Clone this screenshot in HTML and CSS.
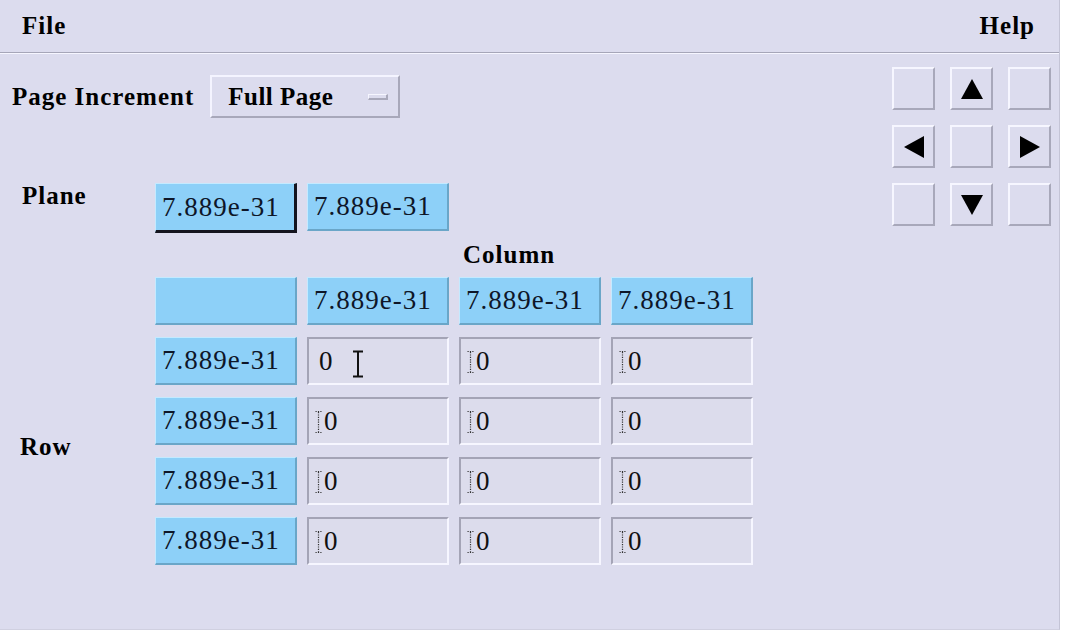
FILE: index.html
```html
<!DOCTYPE html>
<html>
<head>
<meta charset="utf-8">
<link rel="stylesheet" href="styles.css">
</head>
<body>
<div class="window">
  <div class="menubar">
    <span class="menu">File</span>
    <span class="menu">Help</span>
  </div>
  <div class="content">
    <div class="main">
      <div class="pager">
        <span class="label">Page Increment</span>
        <div class="option">Full Page<span class="indicator"></span></div>
      </div>
      <div class="plane">
        <span class="label plane-label">Plane</span>
        <div class="btn blue selected">7.889e-31</div>
        <div class="btn blue">7.889e-31</div>
      </div>
      <div class="label col-label">Column</div>
      <div class="table">
        <div class="label row-label">Row</div>
        <div class="btn blue"></div>
        <div class="btn blue">7.889e-31</div>
        <div class="btn blue">7.889e-31</div>
        <div class="btn blue">7.889e-31</div>

        <div class="btn blue">7.889e-31</div>
        <div class="entry focus"><span class="val">0</span><svg class="ibeam" width="12" height="28" viewBox="0 0 12 28"><path d="M1 1.5h10M6 1.5v25M1 26.5h10" stroke="#111" stroke-width="2" fill="none"/></svg></div>
        <div class="entry"><svg class="tcur" width="7" height="24" viewBox="0 0 7 24"><path d="M0.5 1.5h6M0.5 22.5h6M3.5 2v20" stroke="#333" stroke-width="1.2" stroke-dasharray="1.2 1.2" fill="none"/></svg><span class="val">0</span></div>
        <div class="entry"><svg class="tcur" width="7" height="24" viewBox="0 0 7 24"><path d="M0.5 1.5h6M0.5 22.5h6M3.5 2v20" stroke="#333" stroke-width="1.2" stroke-dasharray="1.2 1.2" fill="none"/></svg><span class="val">0</span></div>

        <div class="btn blue">7.889e-31</div>
        <div class="entry"><svg class="tcur" width="7" height="24" viewBox="0 0 7 24"><path d="M0.5 1.5h6M0.5 22.5h6M3.5 2v20" stroke="#333" stroke-width="1.2" stroke-dasharray="1.2 1.2" fill="none"/></svg><span class="val">0</span></div>
        <div class="entry"><svg class="tcur" width="7" height="24" viewBox="0 0 7 24"><path d="M0.5 1.5h6M0.5 22.5h6M3.5 2v20" stroke="#333" stroke-width="1.2" stroke-dasharray="1.2 1.2" fill="none"/></svg><span class="val">0</span></div>
        <div class="entry"><svg class="tcur" width="7" height="24" viewBox="0 0 7 24"><path d="M0.5 1.5h6M0.5 22.5h6M3.5 2v20" stroke="#333" stroke-width="1.2" stroke-dasharray="1.2 1.2" fill="none"/></svg><span class="val">0</span></div>

        <div class="btn blue">7.889e-31</div>
        <div class="entry"><svg class="tcur" width="7" height="24" viewBox="0 0 7 24"><path d="M0.5 1.5h6M0.5 22.5h6M3.5 2v20" stroke="#333" stroke-width="1.2" stroke-dasharray="1.2 1.2" fill="none"/></svg><span class="val">0</span></div>
        <div class="entry"><svg class="tcur" width="7" height="24" viewBox="0 0 7 24"><path d="M0.5 1.5h6M0.5 22.5h6M3.5 2v20" stroke="#333" stroke-width="1.2" stroke-dasharray="1.2 1.2" fill="none"/></svg><span class="val">0</span></div>
        <div class="entry"><svg class="tcur" width="7" height="24" viewBox="0 0 7 24"><path d="M0.5 1.5h6M0.5 22.5h6M3.5 2v20" stroke="#333" stroke-width="1.2" stroke-dasharray="1.2 1.2" fill="none"/></svg><span class="val">0</span></div>

        <div class="btn blue">7.889e-31</div>
        <div class="entry"><svg class="tcur" width="7" height="24" viewBox="0 0 7 24"><path d="M0.5 1.5h6M0.5 22.5h6M3.5 2v20" stroke="#333" stroke-width="1.2" stroke-dasharray="1.2 1.2" fill="none"/></svg><span class="val">0</span></div>
        <div class="entry"><svg class="tcur" width="7" height="24" viewBox="0 0 7 24"><path d="M0.5 1.5h6M0.5 22.5h6M3.5 2v20" stroke="#333" stroke-width="1.2" stroke-dasharray="1.2 1.2" fill="none"/></svg><span class="val">0</span></div>
        <div class="entry"><svg class="tcur" width="7" height="24" viewBox="0 0 7 24"><path d="M0.5 1.5h6M0.5 22.5h6M3.5 2v20" stroke="#333" stroke-width="1.2" stroke-dasharray="1.2 1.2" fill="none"/></svg><span class="val">0</span></div>
      </div>
    </div>
    <div class="nav">
      <div class="nbtn"></div>
      <div class="nbtn"><svg width="24" height="22" viewBox="0 0 24 22"><polygon points="12,1 23,21 1,21" fill="#000"/></svg></div>
      <div class="nbtn"></div>
      <div class="nbtn"><svg width="22" height="24" viewBox="0 0 22 24"><polygon points="1,12 21,1 21,23" fill="#000"/></svg></div>
      <div class="nbtn"></div>
      <div class="nbtn"><svg width="22" height="24" viewBox="0 0 22 24"><polygon points="21,12 1,1 1,23" fill="#000"/></svg></div>
      <div class="nbtn"></div>
      <div class="nbtn"><svg width="24" height="22" viewBox="0 0 24 22"><polygon points="12,21 23,1 1,1" fill="#000"/></svg></div>
      <div class="nbtn"></div>
    </div>
  </div>
</div>
</body>
</html>
```

FILE: styles.css
```css
html, body {
  margin: 0;
  padding: 0;
  background: #ffffff;
}

.window {
  width: 1060px;
  height: 630px;
  background: #dcdcee;
  display: flex;
  flex-direction: column;
  box-sizing: border-box;
  border-right: 1px solid #c4c4d6;
  border-bottom: 1px solid #d0d0e0;
}

.menubar {
  height: 52px;
  display: flex;
  justify-content: space-between;
  align-items: center;
  padding: 0 24px 0 22px;
  border-bottom: 1px solid #a6a6b8;
  box-shadow: 0 1px 0 #f6f6ff;
  flex: none;
}

.menu, .label {
  font-family: "Liberation Serif", serif;
  font-weight: bold;
  font-size: 25px;
  letter-spacing: 1px;
  color: #000;
}

.content {
  display: flex;
  flex: 1;
}

.main {
  flex: 1;
  display: flex;
  flex-direction: column;
}

.pager {
  margin-top: 22px;
  height: 43px;
  display: flex;
  align-items: center;
  padding-left: 12px;
}

.option {
  margin-left: 16px;
  width: 190px;
  height: 43px;
  box-sizing: border-box;
  border-top: 2px solid #f4f4ff;
  border-left: 2px solid #f4f4ff;
  border-bottom: 2px solid #a8a8ba;
  border-right: 2px solid #a8a8ba;
  display: flex;
  align-items: center;
  padding-left: 16px;
  font-family: "Liberation Serif", serif;
  font-weight: bold;
  font-size: 25px;
  letter-spacing: 0.5px;
  color: #000;
}

.indicator {
  margin-left: auto;
  margin-right: 10px;
  width: 20px;
  height: 6px;
  box-sizing: border-box;
  border-top: 1px solid #f6f6ff;
  border-left: 1px solid #f6f6ff;
  border-bottom: 2px solid #a8a8ba;
  border-right: 2px solid #a8a8ba;
}

.plane {
  margin-top: 65px;
  display: grid;
  grid-template-columns: 145px 142px 142px;
  column-gap: 10px;
  height: 50px;
}

.plane-label {
  padding-left: 22px;
  line-height: 26px;
}

.btn {
  box-sizing: border-box;
  height: 48px;
  display: flex;
  align-items: center;
  padding-left: 6px;
  font-family: "Liberation Serif", serif;
  font-size: 27px;
  letter-spacing: 1px;
  color: #0e1628;
}

.blue {
  background: #8dd0f8;
  border-top: 1px solid #c4eaff;
  border-left: 1px solid #c4eaff;
  border-bottom: 2px solid #6aa6c8;
  border-right: 2px solid #6aa6c8;
}

.blue.selected {
  height: 50px;
  border-bottom: 3px solid #14141e;
  border-right: 3px solid #14141e;
}

.col-label {
  height: 44px;
  line-height: 44px;
  padding-left: 463px;
}

.table {
  display: grid;
  grid-template-columns: 145px 142px 142px 142px 142px;
  grid-auto-rows: 48px;
  column-gap: 10px;
  row-gap: 12px;
}

.row-label {
  grid-column: 1;
  grid-row: 1 / span 5;
  align-self: center;
  padding-left: 20px;
  margin-top: 52px;
}

.entry {
  position: relative;
  box-sizing: border-box;
  height: 48px;
  background: #dcdcec;
  border-top: 2px solid #a4a4b6;
  border-left: 2px solid #a4a4b6;
  border-bottom: 2px solid #f6f6ff;
  border-right: 2px solid #f6f6ff;
  display: flex;
  align-items: center;
  padding-left: 6px;
  font-family: "Liberation Serif", serif;
  font-size: 27px;
  color: #111;
}

.entry.focus {
  padding-left: 10px;
}

.tcur {
  margin-right: 2px;
  margin-top: 2px;
}

.ibeam {
  position: absolute;
  left: 43px;
  top: 11px;
}

.nav {
  margin-top: 14px;
  margin-right: 8px;
  display: grid;
  grid-template-columns: repeat(3, 43px);
  grid-template-rows: repeat(3, 43px);
  column-gap: 15px;
  row-gap: 15px;
  align-self: flex-start;
}

.nbtn {
  box-sizing: border-box;
  border-top: 2px solid #f6f6ff;
  border-left: 2px solid #f6f6ff;
  border-bottom: 2px solid #a8a8ba;
  border-right: 2px solid #a8a8ba;
  display: flex;
  align-items: center;
  justify-content: center;
}
```
